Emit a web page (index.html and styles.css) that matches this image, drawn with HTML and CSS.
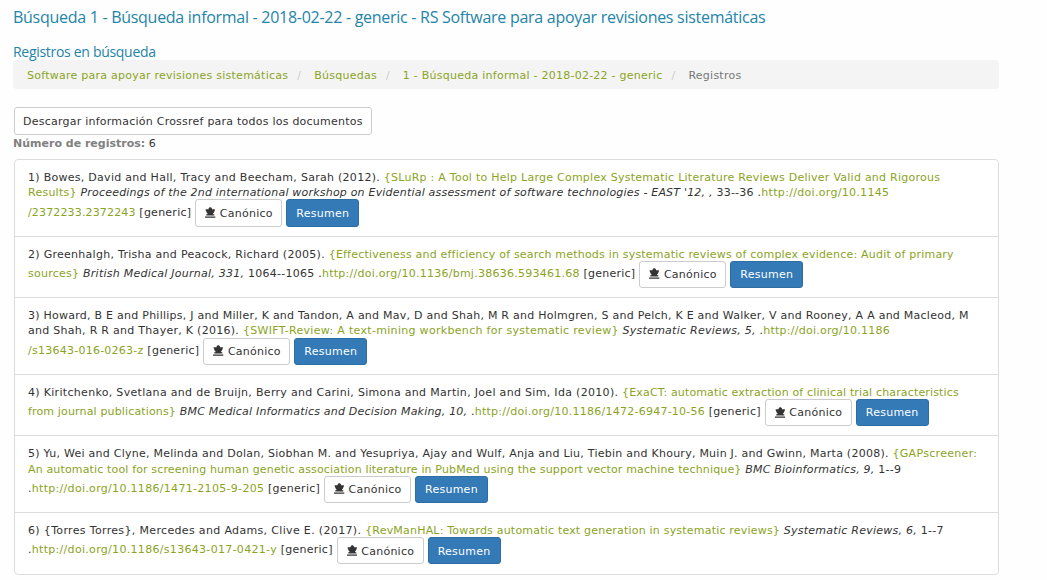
FILE: index.html
```
<!DOCTYPE html>
<html lang="es">
<head>
<meta charset="utf-8">
<title>Registros en búsqueda</title>
<link rel="stylesheet" href="styles.css">
</head>
<body>
<svg width="0" height="0" class="defs"><symbol id="queen" viewBox="0 0 11 11"><path d="M4.5 0h2v.8h.7v1.3h3.1v1L9 6H2L.7 3.1v-1h3.1V.8h.7zM2.5 5.8h6v1.4h1.2v1.3H1.3V7.2h1.2zM0 9.7h11V11H0z"/></symbol></svg>
<main class="page">
<h2 class="title">Búsqueda 1 - Búsqueda informal - 2018-02-22 - generic - RS Software para apoyar revisiones sistemáticas</h2>
<h3 class="subtitle">Registros en búsqueda</h3>
<ol class="breadcrumb"><li><a>Software para apoyar revisiones sistemáticas</a></li><li><a>Búsquedas</a></li><li><a>1 - Búsqueda informal - 2018-02-22 - generic</a></li><li class="active">Registros</li></ol>
<a class="btn download">Descargar información Crossref para todos los documentos</a>
<p class="count"><strong>Número de registros:</strong> 6</p>
<ul class="records">
<li><div><span class="loose">1) Bowes, David and Hall, Tracy and Beecham, Sarah (2012). </span><a>{SLuRp : A Tool to Help Large Complex Systematic Literature Reviews Deliver Valid and Rigorous</a></div><div><a>Results}</a> <em class="snug">Proceedings of the 2nd international workshop on Evidential assessment of software technologies - EAST '12, ,</em> 33--36 .<a class="looser">http://doi.org/10.1145</a></div><div class="actions"><span><a class="tight">/2372233.2372243</a> [generic]</span><a class="btn"><svg class="icon"><use href="#queen"/></svg>Canónico</a><a class="btn primary">Resumen</a></div></li>
<li><div><span class="loose">2) Greenhalgh, Trisha and Peacock, Richard (2005). </span><a class="snug">{Effectiveness and efficiency of search methods in systematic reviews of complex evidence: Audit of primary</a></div><div class="actions"><span><a>sources}</a> <em>British Medical Journal, 331,</em> 1064--1065 .<a>http://doi.org/10.1136/bmj.38636.593461.68</a> [generic]</span><a class="btn"><svg class="icon"><use href="#queen"/></svg>Canónico</a><a class="btn primary">Resumen</a></div></li>
<li><div>3) Howard, B E and Phillips, J and Miller, K and Tandon, A and Mav, D and Shah, M R and Holmgren, S and Pelch, K E and Walker, V and Rooney, A A and Macleod, M</div><div><span class="loose">and Shah, R R and Thayer, K (2016). </span><a class="looser">{SWIFT-Review: A text-mining workbench for systematic review}</a> <em>Systematic Reviews, 5,</em> .<a>http://doi.org/10.1186</a></div><div class="actions"><span><a>/s13643-016-0263-z</a> [generic]</span><a class="btn"><svg class="icon"><use href="#queen"/></svg>Canónico</a><a class="btn primary">Resumen</a></div></li>
<li><div><span class="looser">4) Kiritchenko, Svetlana and de Bruijn, Berry and Carini, Simona and Martin, Joel and Sim, Ida (2010). </span><a class="tight">{ExaCT: automatic extraction of clinical trial characteristics</a></div><div class="actions"><span><a class="tight">from journal publications}</a> <em class="snug">BMC Medical Informatics and Decision Making, 10,</em> .<a>http://doi.org/10.1186/1472-6947-10-56</a> [generic]</span><a class="btn"><svg class="icon"><use href="#queen"/></svg>Canónico</a><a class="btn primary">Resumen</a></div></li>
<li><div>5) Yu, Wei and Clyne, Melinda and Dolan, Siobhan M. and Yesupriya, Ajay and Wulf, Anja and Liu, Tiebin and Khoury, Muin J. and Gwinn, Marta (2008). <a class="looser">{GAPscreener:</a></div><div><a class="tight">An automatic tool for screening human genetic association literature in PubMed using the support vector machine technique}</a> <em class="snug">BMC Bioinformatics, 9,</em> 1--9</div><div class="actions"><span>.<a class="looser">http://doi.org/10.1186/1471-2105-9-205</a> [generic]</span><a class="btn"><svg class="icon"><use href="#queen"/></svg>Canónico</a><a class="btn primary">Resumen</a></div></li>
<li><div><span class="wide">6) {Torres Torres}, Mercedes and Adams, Clive E. (2017). </span><a class="snug">{RevManHAL: Towards automatic text generation in systematic reviews}</a> <em>Systematic Reviews, 6,</em> 1--7</div><div class="actions"><span>.<a class="looser">http://doi.org/10.1186/s13643-017-0421-y</a> [generic]</span><a class="btn"><svg class="icon"><use href="#queen"/></svg>Canónico</a><a class="btn primary">Resumen</a></div></li>
</ul>
</main>
</body>
</html>
```
FILE: styles.css
```
* { box-sizing: border-box; }
body { margin: 0; background: #fefefe; color: #333; font: 11px/15.4px "DejaVu Sans", sans-serif; letter-spacing: .25px; overflow: hidden; }
.defs { position: absolute; }
a { color: #8aa41e; }
.tight { letter-spacing: .15px; }
.snug { letter-spacing: .2px; }
.loose { letter-spacing: .28px; }
.looser { letter-spacing: .31px; }
.wide { letter-spacing: .34px; }
.page { width: 986px; margin-left: 13px; padding-top: 6px; white-space: nowrap; }
.title, .subtitle { margin: 0; color: #2484a8; font-family: "Trebuchet MS", "Open Sans", sans-serif; font-weight: 400; }
.title { font-size: 16px; line-height: 22px; letter-spacing: -0.28px; }
.subtitle { margin-top: 15px; font-size: 14px; line-height: 17px; letter-spacing: -0.3px; }
.breadcrumb { display: flex; margin: 0 0 18px; padding: 1px 14px 0; height: 29px; line-height: 29px; list-style: none; background: #f4f4f4; border-radius: 4px; }
.breadcrumb li + li::before { content: "/"; color: #ccc; padding: 0 13px 0 9px; }
.breadcrumb .active { color: #777; }
.btn { display: inline-flex; align-items: center; height: 27.4px; padding: 1px 9px 0; border: 1px solid #ccc; border-radius: 3px; background: #fff; color: #333; }
.btn.primary { background: #337ab7; border-color: #2e6da4; color: #fff; }
.btn.download { display: flex; width: 358px; height: 28px; padding: 1px 8px 0; margin-left: 1px; letter-spacing: .235px; }
.count { margin: 1px 0 7.6px; letter-spacing: 0; }
.count strong { color: #808080; }
.records { list-style: none; margin: 0 0 0 1px; padding: 0; border: 1px solid #ddd; border-radius: 4px; background: #fff; }
.records li { padding: 9.8px 13px 9.1px; }
.records li + li { border-top: 1px solid #ddd; }
.actions { display: flex; gap: 4px; height: 27.4px; margin-top: -1.3px; align-items: center; }
.actions > span { margin-top: -1.3px; }
.actions .btn { padding-right: 8.5px; }
.actions .btn:not(.primary) { width: 87px; }
.actions .primary { width: 73px; }
.icon { width: 11px; height: 11px; margin: -2px 4px 0 0; fill: #333; }
```
